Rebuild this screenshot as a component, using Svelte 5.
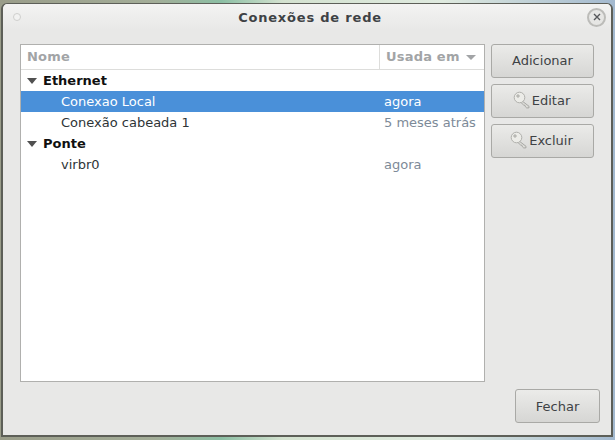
<script>
	const groups = [
		{
			name: 'Ethernet',
			rows: [
				{ name: 'Conexao Local', used: 'agora', selected: true },
				{ name: 'Conexão cabeada 1', used: '5 meses atrás' }
			]
		},
		{
			name: 'Ponte',
			rows: [{ name: 'virbr0', used: 'agora' }]
		}
	];
</script>

{#snippet keyIcon()}
	<svg class="key" viewBox="0 0 18 18" width="18" height="18" fill="none">
		<path d="M8.5 9.5l7.5 5.8v1.5l-2.2.2-1.4-1.2-.4-1.4-1.4-.4-3.4-3.2" fill="#dcdcd8" stroke="#a2a29e" stroke-width="0.9" />
		<circle cx="6.5" cy="6.5" r="5.3" fill="#ecece8" stroke="#b0b0ac" />
		<circle cx="5" cy="5" r="1.3" fill="#c8c8c4" stroke="#9f9f9b" stroke-width="0.6" />
	</svg>
{/snippet}

<div class="desktop">
	<div class="window">
		<header class="titlebar">
			<span class="dot"></span>
			<h1>Conexões de rede</h1>
			<span class="close">
				<svg viewBox="0 0 8 8" width="8" height="8">
					<path d="M1 1l6 6M7 1l-6 6" stroke="#55575a" stroke-width="1.4" />
				</svg>
			</span>
		</header>

		<div class="content">
			<div class="main">
				<div class="list">
					<div class="head">
						<div class="col-name">Nome</div>
						<div class="col-used">Usada em<span class="sort"></span></div>
					</div>
					{#each groups as group}
						<div class="row group">
							<span class="arrow"></span>{group.name}
						</div>
						{#each group.rows as row}
							<div class="row item" class:selected={row.selected}>
								<span class="name">{row.name}</span>
								<span class="used">{row.used}</span>
							</div>
						{/each}
					{/each}
				</div>

				<div class="actions">
					<button>Adicionar</button>
					<button>{@render keyIcon()}Editar</button>
					<button>{@render keyIcon()}Excluir</button>
				</div>
			</div>

			<div class="footer">
				<button class="close-btn">Fechar</button>
			</div>
		</div>
	</div>
</div>

<style>
	:global(body) {
		margin: 0;
	}

	.desktop {
		width: 615px;
		height: 440px;
		box-sizing: border-box;
		padding: 3px 2px 3px 1px;
		background: linear-gradient(90deg, #9a9d8a 0%, #a3ad98 25%, #8cbfa4 36%, #d4e2d0 46%, #dfeadf 72%, #a3b9cf 100%);
		font-family: 'DejaVu Sans', sans-serif;
		font-size: 13px;
		overflow: hidden;
	}

	.window {
		height: 100%;
		box-sizing: border-box;
		display: flex;
		flex-direction: column;
		background: #e8e8e7;
		border: 1px solid #5d5f58;
		border-width: 1px 2px 2px 2px;
		border-radius: 6px 6px 0 0;
	}

	.titlebar {
		display: flex;
		align-items: center;
		justify-content: space-between;
		height: 26px;
		padding: 0 5px 0 10px;
		background: linear-gradient(#f3f3f2, #e8e8e7);
		border-radius: 5px 5px 0 0;
	}

	.titlebar h1 {
		margin: 0 0 0 12px;
		font-size: 13px;
		font-weight: bold;
		color: #3e4245;
		letter-spacing: 0.8px;
	}

	.dot {
		width: 6px;
		height: 6px;
		border-radius: 50%;
		background: #f2f2f1;
		border: 1px solid #cfcfcd;
	}

	.close {
		display: flex;
		align-items: center;
		justify-content: center;
		width: 15px;
		height: 15px;
		border-radius: 50%;
		background: #e6e6e4;
		border: 2px solid #bcbcb9;
	}

	.content {
		flex: 1;
		display: flex;
		flex-direction: column;
		padding: 14px 11px 12px 17px;
	}

	.main {
		flex: 1;
		display: flex;
		gap: 6px;
	}

	.list {
		width: 465px;
		height: 338px;
		box-sizing: border-box;
		background: #fff;
		border: 1px solid #b0b0ae;
	}

	.head {
		display: flex;
		height: 25px;
		box-sizing: border-box;
		border-bottom: 1px solid #dddddb;
		color: #a2a4a6;
		font-weight: bold;
		line-height: 24px;
		letter-spacing: 0.2px;
	}

	.col-name {
		flex: 1;
		padding-left: 6px;
		border-right: 1px solid #dddddb;
	}

	.col-used {
		width: 104px;
		box-sizing: border-box;
		padding-left: 6px;
		display: flex;
		align-items: center;
	}

	.sort {
		margin-left: 6px;
		border: 5px solid transparent;
		border-top: 5px solid #a2a4a6;
		border-bottom: 0;
	}

	.row {
		display: flex;
		align-items: center;
		height: 21px;
	}

	.group {
		font-weight: bold;
		color: #101010;
		padding-left: 6px;
	}

	.arrow {
		margin-right: 6px;
		border: 5px solid transparent;
		border-top: 6px solid #505050;
		border-bottom: 0;
	}

	.item {
		color: #2e3436;
	}

	.name {
		flex: 1;
		padding-left: 40px;
	}

	.used {
		width: 100px;
		color: #7d8a98;
	}

	.selected,
	.selected .used {
		background: #4a90d9;
		color: #fff;
	}

	.actions {
		display: flex;
		flex-direction: column;
		gap: 6px;
	}

	button {
		display: flex;
		align-items: center;
		justify-content: center;
		width: 103px;
		height: 34px;
		padding: 0;
		font: inherit;
		color: #3e4245;
		background: linear-gradient(#ebebe9, #d6d6d4);
		border: 1px solid #a9a9a6;
		border-radius: 3px;
	}

	.actions button {
		padding-bottom: 2px;
	}

	.key {
		margin: 0 1px 0 -2px;
	}

	.footer {
		display: flex;
		justify-content: flex-end;
	}

	.close-btn {
		width: 85px;
	}
</style>
